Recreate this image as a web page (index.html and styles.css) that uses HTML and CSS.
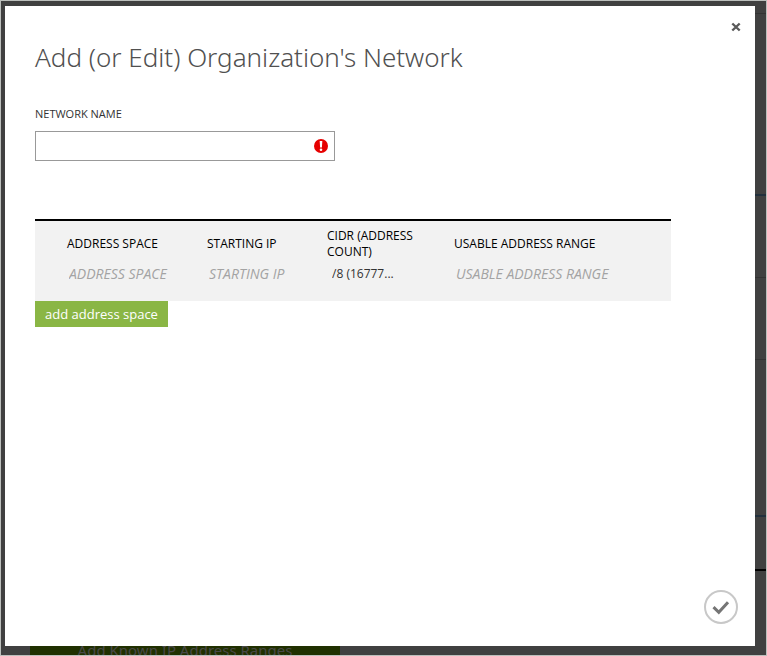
FILE: index.html
```html
<!DOCTYPE html>
<html lang="en">
<head>
<meta charset="utf-8">
<title>Add (or Edit) Organization's Network</title>
<link rel="stylesheet" href="styles.css">
</head>
<body>
<div class="backdrop" aria-hidden="true">
  <span class="rule rule-faint rule-1"></span>
  <span class="rule rule-blue rule-2"></span>
  <span class="rule rule-faint rule-3"></span>
  <span class="rule rule-faint rule-4"></span>
  <span class="rule rule-blue rule-5"></span>
  <span class="rule rule-black rule-6"></span>
  <span class="behind-button">Add Known IP Address Ranges</span>
</div>
<main class="dialog" role="dialog" aria-labelledby="title">
  <button class="close" type="button" aria-label="Close">
    <svg width="10" height="10" viewBox="0 0 10 10"><path d="M1.3 1.5 8.7 8.5M8.7 1.5 1.3 8.5" stroke="#5a5a5a" stroke-width="2.4"/></svg>
  </button>
  <h1 id="title">Add (or Edit) Organization's Network</h1>
  <form class="form">
    <label class="label" for="name">NETWORK NAME</label>
    <div class="field">
      <input class="name-input" id="name" type="text">
      <svg class="error" width="14" height="14" viewBox="0 0 14 14"><circle cx="7" cy="7" r="7" fill="#e60000"/><path d="M5.7 2h2.6L7.9 8.6H6.1z" fill="#fff"/><circle cx="7" cy="10.8" r="1.3" fill="#fff"/></svg>
    </div>
    <table class="spaces">
      <colgroup><col class="col-space"><col class="col-ip"><col class="col-cidr"><col></colgroup>
      <thead>
        <tr><th>ADDRESS SPACE</th><th>STARTING IP</th><th>CIDR (ADDRESS COUNT)</th><th>USABLE ADDRESS RANGE</th></tr>
      </thead>
      <tbody>
        <tr>
          <td><input class="cell" type="text" placeholder="ADDRESS SPACE" aria-label="Address space"></td>
          <td><input class="cell" type="text" placeholder="STARTING IP" aria-label="Starting IP"></td>
          <td><select class="cell cidr" aria-label="CIDR"><option>/8 (16777...</option></select></td>
          <td><input class="cell" type="text" placeholder="USABLE ADDRESS RANGE" aria-label="Usable address range"></td>
        </tr>
      </tbody>
    </table>
    <button class="add" type="button">add address space</button>
  </form>
  <button class="confirm" type="button" aria-label="Save">
    <svg width="34" height="34" viewBox="0 0 34 34" fill="none"><circle cx="17" cy="17" r="16" stroke="#c8c8c8" stroke-width="2"/><path d="M9.5 17.2 14.8 22.3 24 12.2" stroke="#757575" stroke-width="3"/></svg>
  </button>
</main>
</body>
</html>
```
FILE: styles.css
```css
* { box-sizing: border-box; }

body {
  margin: 0;
  min-height: 100vh;
  display: flex;
  position: relative;
  padding: 5px 11px 9px 4px;
  border: 1px solid #bcbfbc;
  background: #404040;
  font-family: "Open Sans", "Noto Sans", sans-serif;
  color: #333;
}

button, input, select { font-family: inherit; }

.backdrop {
  position: absolute;
  inset: 0;
  overflow: hidden;
}

.rule {
  position: absolute;
  right: 0;
  width: 11px;
  height: 1px;
}
.rule-faint { background: #333; }
.rule-blue { height: 2px; background: #22303d; }
.rule-black { height: 2px; background: #000; }
.rule-1 { top: 12px; }
.rule-2 { top: 193px; }
.rule-3 { top: 276px; }
.rule-4 { top: 358px; }
.rule-5 { top: 514px; }
.rule-6 { top: 568px; }

.behind-button {
  position: absolute;
  left: 29px;
  bottom: -16px;
  width: 310px;
  height: 40px;
  background: #203000;
  color: #484848;
  font-family: "Noto Sans", "Open Sans", sans-serif;
  font-size: 15px;
  line-height: 38px;
  text-align: center;
}

.dialog {
  position: relative;
  flex: 1;
  display: flex;
  flex-direction: column;
  padding: 31px 30px 22px;
  background: #fff;
}

.close {
  position: absolute;
  top: 16px;
  right: 14px;
  padding: 0;
  border: 0;
  background: none;
  line-height: 0;
}

h1 {
  margin: 0;
  font-family: "Noto Sans", "Open Sans", sans-serif;
  font-size: 26px;
  font-weight: 300;
  line-height: 40px;
  color: #505050;
}

.form { flex: 1; }

.label {
  display: block;
  margin-top: 29px;
  font-size: 11px;
  line-height: 16px;
}

.field {
  position: relative;
  max-width: 300px;
  margin-top: 9px;
}

.name-input {
  display: block;
  width: 100%;
  height: 30px;
  padding: 0 28px 0 8px;
  border: 1px solid #999;
  font-size: 13px;
}

.error {
  position: absolute;
  top: 8px;
  right: 7px;
}

.spaces {
  width: 100%;
  max-width: 636px;
  margin-top: 58px;
  border-collapse: separate;
  border-spacing: 0;
  border-top: 2px solid #000;
  background: #f2f2f2;
  table-layout: fixed;
}
.col-space { width: 172px; }
.col-ip { width: 120px; }
.col-cidr { width: 127px; }

th {
  height: 40px;
  padding: 7px 32px 1px 0;
  font-size: 12px;
  font-weight: 400;
  line-height: 16px;
  text-align: left;
  vertical-align: middle;
  color: #000;
}
td {
  height: 40px;
  padding: 2px 20px 0 0;
  vertical-align: top;
}
th:first-child, td:first-child { padding-left: 32px; }
th:last-child, td:last-child { padding-right: 32px; }

.cell {
  display: block;
  width: 100%;
  height: 20px;
  padding: 0 2px;
  border: 0;
  background: none;
  font-size: 14px;
  color: #333;
}
.cell::placeholder {
  color: #a3a3a3;
  font-style: italic;
}
.cidr { appearance: none; padding: 0 5px; font-size: 12px; }

.add {
  display: block;
  height: 26px;
  padding: 0 10px;
  border: 0;
  background: #8ab645;
  color: #fff;
  font-size: 13px;
  line-height: 26px;
}

.confirm {
  align-self: flex-end;
  margin-right: -13px;
  padding: 0;
  border: 0;
  background: none;
  line-height: 0;
}
```
